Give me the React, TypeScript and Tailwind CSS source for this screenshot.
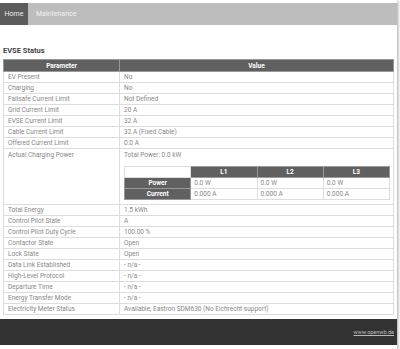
const rows: [string, string][] = [
  ["EV Present", "No"],
  ["Charging", "No"],
  ["Failsafe Current Limit", "Not Defined"],
  ["Grid Current Limit", "20 A"],
  ["EVSE Current Limit", "32 A"],
  ["Cable Current Limit", "32 A (Fixed Cable)"],
  ["Offered Current Limit", "0.0 A"],
];

const rowsAfter: [string, string][] = [
  ["Total Energy", "1.5 kWh"],
  ["Control Pilot State", "A"],
  ["Control Pilot Duty Cycle", "100.00 %"],
  ["Contactor State", "Open"],
  ["Lock State", "Open"],
  ["Data Link Established", "- n/a -"],
  ["High-Level Protocol", "- n/a -"],
  ["Departure Time", "- n/a -"],
  ["Energy Transfer Mode", "- n/a -"],
  ["Electricity Meter Status", "Available, Eastron SDM630 (No Eichrecht support)"],
];

function Row({ label, value }: { label: string; value: string }) {
  return (
    <tr className="h-[11px]">
      <td className="border border-[#ddd] px-[4px] py-0 leading-[10px]">{label}</td>
      <td className="border border-[#ddd] px-[4px] py-0 leading-[10px]">{value}</td>
    </tr>
  );
}

function PowerTable() {
  const cell = "border border-[#ddd] px-[3px] h-[11px] leading-[10px]";
  const head = "border border-[#999] bg-[#606060] text-white font-bold text-center h-[11px] leading-[10px]";
  return (
    <table className="w-full border-collapse table-fixed mt-[6px] mb-[4px]">
      <tbody>
        <tr>
          <td className="border border-[#ddd] bg-white h-[11px]"></td>
          <td className={head}>L1</td>
          <td className={head}>L2</td>
          <td className={head}>L3</td>
        </tr>
        <tr>
          <td className={head}>Power</td>
          <td className={cell}>0.0 W</td>
          <td className={cell}>0.0 W</td>
          <td className={cell}>0.0 W</td>
        </tr>
        <tr>
          <td className={head}>Current</td>
          <td className={cell}>0.000 A</td>
          <td className={cell}>0.000 A</td>
          <td className={cell}>0.000 A</td>
        </tr>
      </tbody>
    </table>
  );
}

export default function App() {
  return (
    <div className="w-[397px] bg-white shadow-[1px_1px_3px_rgba(0,0,0,0.35)] pt-[3px] font-['Roboto',sans-serif] text-[6.5px] text-[#888]">
      <nav className="flex h-[22px] bg-[#bdbdbd] text-[7px]">
        <div className="flex items-center justify-center w-[28px] bg-[#5c5c5c] text-[#eee]">Home</div>
        <div className="flex items-center px-[8px] text-[#f2f2f2]">Maintenance</div>
      </nav>

      <div className="px-[3px] pt-[21px] pb-[4px]">
        <h2 className="text-[7.5px] font-bold text-[#444] leading-[10px] mb-[3px]">EVSE Status</h2>
        <table className="w-[391px] border-collapse">
          <colgroup>
            <col className="w-[116px]" />
            <col />
          </colgroup>
          <thead>
            <tr className="h-[12px]">
              <th className="border border-[#999] bg-[#606060] text-white font-bold leading-[10px]">Parameter</th>
              <th className="border border-[#999] bg-[#606060] text-white font-bold leading-[10px]">Value</th>
            </tr>
          </thead>
          <tbody>
            {rows.map(([l, v]) => (
              <Row key={l} label={l} value={v} />
            ))}
            <tr>
              <td className="border border-[#ddd] px-[4px] pt-[1px] align-top leading-[10px]">Actual Charging Power</td>
              <td className="border border-[#ddd] pl-[4px] pr-[3px] pt-[1px] align-top leading-[10px]">
                <div>Total Power: 0.0 kW</div>
                <PowerTable />
              </td>
            </tr>
            {rowsAfter.map(([l, v]) => (
              <Row key={l} label={l} value={v} />
            ))}
          </tbody>
        </table>
      </div>

      <footer className="flex items-center justify-end h-[26px] bg-[#333] px-[3px]">
        <a className="underline text-[#bbb] text-[5.5px]">www.openwb.de</a>
      </footer>
      <div className="h-[5px]" />
    </div>
  );
}
